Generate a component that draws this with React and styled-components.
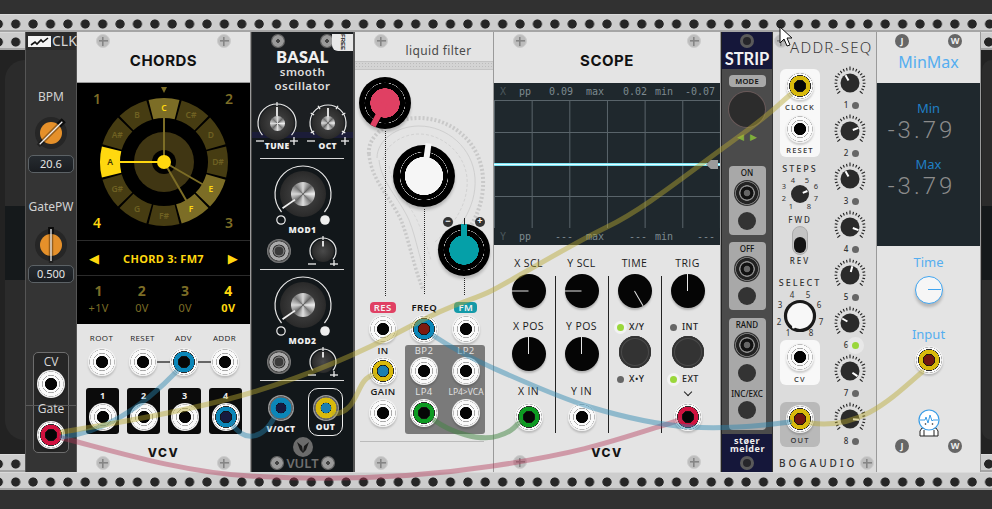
import React from 'react'
import styled, { createGlobalStyle } from 'styled-components'

const GlobalStyle = createGlobalStyle`
  html, body { margin: 0; padding: 0; background: #2e2e2e; }
  * { box-sizing: border-box; }
`

const SANS = '"Open Sans", "Noto Sans", sans-serif'
const YELLOW = '#ffd80f'
const OLIVE = '#7c6d26'
const DIM = '#463c12'

const Page = styled.div`
  position: relative;
  width: 992px;
  height: 509px;
  overflow: hidden;
  background: #2f2f2f;
  display: flex;
  flex-direction: column;
  font-family: ${SANS};
`

const Band = styled.div`
  height: ${p => p.$h}px;
  background: #313131;
`

const Rail = styled.div`
  height: 18px;
  flex: none;
  background-color: #cdcdcd;
  background-image: radial-gradient(circle at center, #262626 0 4.2px, transparent 4.9px);
  background-size: 17.4px 18px;
  background-position: ${p => p.$x ?? 7}px 0;
  border-top: 1px solid #dadada;
  border-bottom: 2px solid #a5a5a5;
`

const Rack = styled.div`
  display: flex;
  height: 440px;
`

const Stub = styled.div`
  width: ${p => p.$w}px;
  background: #222;
  display: flex;
  flex-direction: column;
  justify-content: space-between;
  overflow: hidden;
`

const StubPanel = styled.div`
  flex: 1;
  margin: 10px 0 14px ${p => p.$left}px;
  background: linear-gradient(#2b2b2b 0 146px, #15191b 146px 220px, #2b2b2b 220px);
  border-radius: 22px 0 0 22px;
`

const Panel = styled.div`
  width: ${p => p.$w}px;
  flex: none;
  display: flex;
  flex-direction: column;
  background: ${p => p.$bg || '#e4e4e4'};
  border-right: 1px solid ${p => p.$edge || '#9a9a9a'};
`

/* shared bits */
const Screw = styled.div`
  width: 14px;
  height: 14px;
  border-radius: 50%;
  background:
    linear-gradient(#858585, #858585) center / 9px 1.6px no-repeat,
    linear-gradient(#858585, #858585) center / 1.6px 9px no-repeat,
    #bcbcbc;
  border: 1px solid #cdcdcd;
  flex: none;
`

const ScrewRow = styled.div`
  display: flex;
  justify-content: space-between;
  align-items: center;
  height: 18px;
  margin-top: ${p => p.$mt ?? 0}px;
  padding: 0 ${p => p.$pad ?? 18}px;
  flex: none;
`

const TitleBar = styled.div`
  height: ${p => p.$h ?? 50}px;
  flex: none;
`

const Title = styled.div`
  margin-top: -1px;
  text-align: center;
  font: 700 15px/24px Inter, "Noto Sans", sans-serif;
  letter-spacing: 0.5px;
  color: #111;
`

const Port = styled.div`
  width: 28px;
  height: 28px;
  border-radius: 50%;
  flex: none;
  box-shadow: 0 2px 2px rgba(0, 0, 0, 0.18);
  background: ${p => p.$plug
    ? `radial-gradient(circle closest-side, ${p.$core || '#060606'} 0 38%, #141414 40% 43%, ${p.$plug} 45% 73%, #2b2b2b 75% 77%, #fcfcfc 79% 89%, #b4b4b4 90% 92%, #f2f2f2 94%)`
    : `radial-gradient(circle closest-side, #050505 0 42%, #fafafa 45% 59%, #a2a2a2 61% 63%, #fafafa 65% 86%, #bcbcbc 88% 90%, #f2f2f2 92%)`};
`

const Label = styled.div`
  height: ${p => p.$h ?? 14}px;
  margin-top: ${p => p.$mt ?? 0}px;
  font: ${p => p.$weight ?? 500} ${p => p.$size ?? 10.5}px/${p => p.$h ?? 14}px ${SANS};
  letter-spacing: ${p => p.$ls ?? 0.4}px;
  color: ${p => p.$color || '#1a1a1a'};
  text-align: center;
  white-space: nowrap;
  flex: none;
`

const Logo = styled.div`
  height: 14px;
  margin-top: ${p => p.$mt ?? 0}px;
  text-align: center;
  font: 800 12px/14px Inter, sans-serif;
  letter-spacing: 1.5px;
  color: #141414;
  flex: none;
`

/* CLK */
const ClkPanel = styled(Panel)`
  align-items: center;
  background: #343434;
  border-left: 1px solid #555;
  border-right: 1px solid #555;
`

const ClkHead = styled.div`
  display: flex;
  align-items: center;
  gap: 1px;
  height: 18px;
  margin-bottom: 39px;
  width: 100%;
  padding-left: 2px;
  background: #2b2b2b;
`

const ClkTag = styled.div`
  width: 23px;
  height: 11px;
  background: #f4f4f4;
  display: flex;
`

const ClkName = styled.div`
  font: 400 14px/18px "Noto Sans", sans-serif;
  color: #d6d6d6;
`

const ClkLabel = styled.div`
  height: 16px;
  margin-top: ${p => p.$mt ?? 0}px;
  font: 400 12px/16px "Noto Sans", sans-serif;
  color: #d2d2d2;
`

const KnobSlot = styled.div`
  margin-top: ${p => p.$mt ?? 0}px;
  height: ${p => p.$h}px;
  flex: none;
`

const ValueBox = styled.div`
  width: 46px;
  height: 18px;
  margin-top: ${p => p.$mt ?? 4}px;
  border-radius: 5px;
  border: 1px solid #5c6266;
  background: linear-gradient(#262b30, #1a1d21);
  color: #e5e5e5;
  font: 400 11px/16px "Noto Sans", sans-serif;
  text-align: center;
`

const GateBox = styled.div`
  width: 36px;
  height: 101px;
  margin-top: 69px;
  padding-top: 1px;
  border: 1px solid #6d6d6d;
  border-radius: 5px;
  background: #262626;
  display: flex;
  flex-direction: column;
  align-items: center;
`

const GateDivider = styled.div`
  width: 50px;
  height: 1px;
  flex: none;
  margin: 7px 0 -5px;
  background: #5a5a5a;
`

const GatePort = styled(Port)`
  margin-top: 4px;
`

/* chords */
const Screen = styled.div`
  background: #000;
  height: 242px;
  display: flex;
  flex-direction: column;
  flex: none;
  border-top: 1px solid #999;
`

const ChordRow = styled.div`
  height: 36px;
  flex: none;
  padding: 0 12px;
  border-top: 1px solid #2b2b2b;
  border-bottom: 1px solid #2b2b2b;
  display: flex;
  justify-content: space-between;
  align-items: center;
  color: ${YELLOW};
  font: 700 11px/1 "Noto Sans", sans-serif;
  letter-spacing: 0.3px;
`

const Arrow = styled.span`
  font: 13px/1 "DejaVu Sans", sans-serif;
`

const StepGrid = styled.div`
  display: grid;
  grid-template-columns: repeat(4, 1fr);
  text-align: center;
  padding-top: 5px;
`

const StepNum = styled.div`
  font: 700 14px/19px "Noto Sans", sans-serif;
  color: ${p => p.$on ? YELLOW : OLIVE};
`

const StepVolt = styled.div`
  font: ${p => p.$on ? 700 : 400} 11px/16px "Noto Sans", sans-serif;
  letter-spacing: 0.3px;
  color: ${p => p.$on ? YELLOW : OLIVE};
`

const ChordBottom = styled.div`
  flex: 1;
  display: flex;
  flex-direction: column;
`

const InLabels = styled.div`
  display: grid;
  grid-template-columns: repeat(4, 41px);
  padding: 7px 0 0 4px;
  height: 24px;
`

const InPorts = styled.div`
  display: flex;
  align-items: center;
  padding-left: 11px;
  height: 28px;
`

const Wire = styled.div`
  width: 13px;
  height: 2px;
  background: ${p => p.$off ? 'transparent' : '#666'};
`

const OutRow = styled.div`
  display: flex;
  gap: 8px;
  padding-left: 9px;
  margin-top: 12px;
`

const OutBox = styled.div`
  width: 33px;
  height: 46px;
  background: #0b0b0b;
  border-radius: 3px;
  display: flex;
  flex-direction: column;
  align-items: center;
`

const OutNum = styled.div`
  height: 15px;
  color: #f0f0f0;
  font: 700 9px/15px "Noto Sans", sans-serif;
`

/* basal */
const BasalPanel = styled(Panel)`
  background: linear-gradient(#1c1f22 0 100px, #1b1c38 100px 106px, #12171a 106px);
  border-left: 1px solid #444;
  border-right: 2px solid #555;
  position: relative;
`

const FreeTag = styled.div`
  position: absolute;
  top: 2px;
  right: 0;
  width: 21px;
  height: 17px;
  background: #e8e8e8;
  border-radius: 0 0 0 6px;
  color: #111;
  font: 900 6px/21px "Liberation Sans", sans-serif;
  text-align: center;
  writing-mode: vertical-rl;
`

const MetalScrew = styled.div`
  width: 14px;
  height: 14px;
  border-radius: 50%;
  background: radial-gradient(circle, #444 0 18%, #9a9a9a 20% 55%, #666 60%);
  flex: none;
`

const BasalName = styled.div`
  text-align: center;
  color: #f0f0f0;
  font: 800 16px/17px Lato, "Noto Sans", sans-serif;
  letter-spacing: 0.4px;
  margin-top: -2px;
`

const BasalSub = styled.div`
  text-align: center;
  color: #dcdcdc;
  font: 600 11.5px/14px "Noto Sans", sans-serif;
  letter-spacing: 0.4px;
`

const TwoCols = styled.div`
  display: grid;
  grid-template-columns: 1fr 1fr;
  justify-items: center;
  align-items: center;
  margin-top: ${p => p.$mt ?? 0}px;
  padding: 0 ${p => p.$pr ?? 0}px 0 ${p => p.$pl ?? 0}px;
  flex: none;
`

const KnobStack = styled.div`
  display: grid;
  width: ${p => p.$s}px;
  height: ${p => p.$s}px;
  margin: ${p => p.$m ?? '0 auto'};
  flex: none;
`

const KnobLayer = styled.div`
  grid-area: 1 / 1;
  display: flex;
  align-items: center;
  justify-content: center;
`

const MetalBody = styled.div`
  width: ${p => p.$s}px;
  height: ${p => p.$s}px;
  border-radius: 50%;
  background: radial-gradient(circle, #4a4a4a, #2a2a2a 70%, #1f1f1f);
  display: flex;
  align-items: center;
  justify-content: center;
`

const MetalCap = styled.div`
  width: ${p => p.$s}px;
  height: ${p => p.$s}px;
  border-radius: 50%;
  background: conic-gradient(#d8d8d8, #666, #eee, #777, #dedede, #666, #d8d8d8, #777, #d8d8d8);
`

const Divider = styled.div`
  height: 1px;
  background: #d8d8d8;
  margin: ${p => p.$m};
  flex: none;
`

const Jack = styled.div`
  width: ${p => p.$s ?? 24}px;
  height: ${p => p.$s ?? 24}px;
  border-radius: 50%;
  flex: none;
  background: ${p => p.$dark
    ? 'radial-gradient(circle closest-side, #666 0 22%, #111 28% 48%, #8a8a8a 52% 58%, #222 62% 82%, #777 86% 90%, #333 93%)'
    : 'radial-gradient(circle closest-side, #3b3b3b 0 35%, #777 38% 45%, #333 48% 52%, #aaa 56% 78%, #444 82%, #888)'};
`

const PlugJack = styled(Jack)`
  width: 26px;
  height: 26px;
  background: radial-gradient(circle closest-side, ${p => p.$core} 0 38%, #111 40%, ${p => p.$plug} 43% 78%, #666 82% 90%, #9a9a9a 92%);
`

const IoRow = styled.div`
  display: flex;
  justify-content: space-between;
  padding: 0 10px 0 7px;
  margin-top: 7px;
  flex: none;
`

const IoCell = styled.div`
  width: 44px;
  display: flex;
  flex-direction: column;
  align-items: center;
  padding-top: 7px;
`

const OutLoop = styled.div`
  width: 35px;
  height: 48px;
  border: 1.5px solid #eee;
  border-radius: 10px;
  display: flex;
  flex-direction: column;
  align-items: center;
  padding-top: 6px;
`

const VultMark = styled.div`
  width: 20px;
  height: 20px;
  margin: 1px auto -3px;
  border-radius: 50%;
  background: #6b6b6b;
  flex: none;
  display: flex;
  align-items: center;
  justify-content: center;
`

const VultFoot = styled.div`
  display: flex;
  justify-content: space-between;
  align-items: center;
  padding: 0 18px;
  height: 18px;
  color: #6f6f6f;
  font: 600 13px/18px "Noto Sans", sans-serif;
`

/* liquid filter */
const FilterHead = styled.div`
  margin-top: -6px;
  padding-left: 29px;
  text-align: center;
  font: 400 12px/14px "Noto Sans", sans-serif;
  letter-spacing: 0.4px;
  color: #4a4a4a;
  height: 17px;
  flex: none;
`

const PatternBar = styled.div`
  height: 9px;
  flex: none;
  background-color: #d4d4d4;
  background-image: radial-gradient(#bcbcbc 0.8px, transparent 1px);
  background-size: 3px 3px;
  border-top: 1px solid #c4c4c4;
  border-bottom: 1px solid #c4c4c4;
`

const KnobStage = styled.div`
  position: relative;
  height: 226px;
  padding-top: 7px;
  flex: none;
`

const Paisley = styled.svg`
  position: absolute;
  left: 8px;
  top: 44px;
`

const BigDial = styled.div`
  position: relative;
  width: ${p => p.$s}px;
  height: ${p => p.$s}px;
  margin: ${p => p.$mt}px 0 0 ${p => p.$ml}px;
  border-radius: 50%;
  box-shadow: 0 3px 3px rgba(0, 0, 0, 0.2);
  background: radial-gradient(circle closest-side, ${p => p.$color} 0 ${p => p.$core}%, #000 ${p => p.$core + 1}% 76%, #aaa 77% 78%, #000 79%);

  &::before {
    content: '';
    position: absolute;
    left: calc(50% - 3px);
    top: ${p => p.$top}px;
    width: 6px;
    height: ${p => p.$s / 2 - p.$top}px;
    background: ${p => p.$color};
    transform-origin: 50% 100%;
    transform: rotate(${p => p.$angle}deg);
  }

  &::after {
    content: '';
    position: absolute;
    left: 50%;
    top: calc(100% + 2px);
    height: ${p => p.$tail}px;
    border-left: 1.5px dotted #222;
  }
`

const PlusMinus = styled.span`
  position: absolute;
  top: -7px;
  ${p => p.$side}: 5px;
  width: 10px;
  height: 10px;
  border-radius: 50%;
  background: #333;
  color: #fff;
  font: 700 9px/9px "Liberation Sans", sans-serif;
  text-align: center;
`

const DialTick = styled.span`
  position: absolute;
  left: 25.5px;
  top: -6px;
  width: 1px;
  height: 7px;
  background: #222;
`

const Triple = styled.div`
  display: grid;
  grid-template-columns: repeat(3, 41.5px);
  justify-items: center;
  padding-left: 7px;
  flex: none;
`

const Pill = styled.div`
  height: 11px;
  margin: 6px 0 2px;
  padding: 0 ${p => p.$pad}px;
  border-radius: 4px;
  background: ${p => p.$bg || 'transparent'};
  color: ${p => p.$bg ? '#f3f3f3' : '#111'};
  font: 600 9.5px/11px "Noto Sans", sans-serif;
  letter-spacing: 0.4px;
`

const FilterLower = styled.div`
  display: flex;
  margin-top: 2px;
  flex: none;
`

const FilterLeft = styled.div`
  width: 50px;
  padding-left: 6px;
  display: flex;
  flex-direction: column;
  align-items: center;
`

const OutputsBox = styled.div`
  width: 80px;
  height: 89px;
  border-radius: 3px;
  background: #7a7a7a;
  display: grid;
  grid-template-columns: 42px 42px;
  justify-content: center;
  justify-items: center;
  align-content: start;
`

const Rule = styled.div`
  height: 1px;
  margin: 7px 9px 12px 5px;
  background: #bbb;
  flex: none;
`

/* scope */
const ScopeScreen = styled.div`
  height: 162px;
  flex: none;
  background: #1f282d;
  display: flex;
  flex-direction: column;
`

const StatRow = styled.div`
  display: grid;
  grid-template-columns: 18px 26px 35px 44px 30px 34px 34px;
  height: 17px;
  flex: none;
  font: 400 10px/17px "DejaVu Sans Mono", monospace;
  color: #7d8a90;
`

const StatCell = styled.span`
  text-align: ${p => p.$right ? 'right' : 'center'};
  color: ${p => p.$faint ? '#4b575c' : '#7d8a90'};
`

const GridArea = styled.div`
  position: relative;
  height: 128px;
  flex: none;
  background-image:
    linear-gradient(#59646a 1px, transparent 1px),
    linear-gradient(90deg, #59646a 1px, transparent 1px);
  background-size: 37.67px 32px;
`

const Trace = styled.div`
  position: absolute;
  left: 0;
  right: 0;
  top: 63px;
  height: 3px;
  background: linear-gradient(#45d6ee, #e4fdff, #45d6ee);
`

const TraceMark = styled.div`
  position: absolute;
  right: 2px;
  top: 60px;
  width: 12px;
  height: 9px;
  background: #9b9b9b;
  clip-path: polygon(0 50%, 40% 0, 100% 0, 100% 100%, 40% 100%);
`

const ScopeControls = styled.div`
  display: grid;
  grid-template-columns: repeat(4, 53px);
  padding-left: 8px;
  flex: none;
  height: 192px;
`

const ScopeCol = styled.div`
  display: flex;
  flex-direction: column;
  align-items: center;
  padding-top: 11px;
  background: ${p => p.$first ? 'none' : 'linear-gradient(#222, #222) left 31px / 1px 157px no-repeat'};
`

const Dial = styled.div`
  position: relative;
  width: 34px;
  height: 34px;
  margin-top: ${p => p.$mt ?? 4}px;
  border-radius: 50%;
  background: #050505;
  box-shadow: 0 2px 2px rgba(0, 0, 0, 0.22);
  flex: none;

  &::after {
    content: '';
    position: absolute;
    left: 16.5px;
    top: 0;
    width: 1px;
    height: 17px;
    background: #e6e6e6;
    transform-origin: 50% 100%;
    transform: rotate(${p => p.$angle}deg);
  }
`

const LedRow = styled.div`
  display: flex;
  align-items: center;
  gap: 5px;
  height: 14px;
  margin-top: ${p => p.$mt ?? 0}px;
  padding-left: ${p => p.$pl ?? 0}px;
  font: 500 9px/14px "Noto Sans", sans-serif;
  letter-spacing: 0.4px;
  color: #222;
  align-self: flex-start;
  flex: none;
`

const Led = styled.div`
  width: 7px;
  height: 7px;
  border-radius: 50%;
  flex: none;
  background: ${p => p.$on ? '#9ad73b' : '#666'};
  box-shadow: ${p => p.$on ? '0 0 0 3px rgba(255,255,255,.55)' : 'none'};
`

const PushButton = styled.div`
  width: ${p => p.$s ?? 32}px;
  height: ${p => p.$s ?? 32}px;
  margin-top: ${p => p.$mt ?? 0}px;
  border-radius: 50%;
  background: ${p => p.$tone || '#333'};
  box-shadow: inset 0 0 0 ${p => p.$s ? 0 : 2}px #333, inset 0 0 0 ${p => p.$s ? 0 : 3}px #4a4a4a;
  flex: none;
`

const Chevron = styled.div`
  width: 6px;
  height: 6px;
  margin: 3px 0 8px;
  border-right: 1px solid #222;
  border-bottom: 1px solid #222;
  transform: rotate(45deg);
  flex: none;
`

/* strip */
const StripPanel = styled(Panel)`
  background: #4b4b4b;
  align-items: center;
  border-left: 1px solid #222;
  border-right: 1px solid #333;
`

const NavyTop = styled.div`
  width: 100%;
  height: 37px;
  background: #15173a;
  display: flex;
  flex-direction: column;
  align-items: center;
  color: #f2f2f2;
  font: 700 16.5px/18px Lato, "Noto Sans", sans-serif;
  padding-top: 2px;
  flex: none;
`

const NavyScrew = styled.div`
  width: 14px;
  height: 14px;
  border-radius: 50%;
  margin-bottom: 2px;
  border: 3px solid #5a5a5a;
  background: #26262a;
  flex: none;
`

const NavyBottom = styled.div`
  width: 100%;
  flex: 1;
  margin-top: 4px;
  background: #15173a;
  display: flex;
  flex-direction: column;
  align-items: center;
  padding-top: 3px;
`

const NavyText = styled.div`
  width: 34px;
  height: 16px;
  flex: none;
  color: #eee;
  text-align: center;
  font: 700 9px/8px "Noto Sans", sans-serif;
  letter-spacing: 0.5px;
`

const NavyFootScrew = styled(NavyScrew)`
  margin-top: 3px;
`

const ModePill = styled.div`
  width: 37px;
  height: 12px;
  margin-top: 6px;
  border-radius: 4px;
  background: #a8a8a8;
  color: #111;
  font: 600 7.5px/12px "Noto Sans", sans-serif;
  text-align: center;
  letter-spacing: 0.3px;
`

const ModeKnob = styled.div`
  width: 36px;
  height: 36px;
  margin-top: 5px;
  border-radius: 50%;
  background: #2c2c2c;
  box-shadow: 0 0 0 1px #6a5a5a;
`

const ModeArrows = styled.div`
  display: flex;
  gap: 6px;
  height: 11px;
  margin: 5px 0 23px;
  color: #7fae3a;
  font: 9px/11px "DejaVu Sans", sans-serif;
`

const StripBox = styled.div`
  width: 37px;
  height: ${p => p.$h}px;
  margin-top: ${p => p.$mt ?? 0}px;
  border-radius: 4px;
  background: #a8a8a8;
  display: flex;
  flex-direction: column;
  align-items: center;
  flex: none;
`

const StripLabel = styled.div`
  height: 14px;
  margin-top: ${p => p.$mt ?? 0}px;
  color: #111;
  font: 500 8px/14px "Noto Sans", sans-serif;
  flex: none;
`

/* addr-seq */
const AddrHead = styled.div`
  height: 34px;
  display: flex;
  padding: 2px 0 0 1px;
  gap: 2px;
  flex: none;
`

const AddrTitle = styled.div`
  font: 300 15px/22px "Noto Sans", sans-serif;
  letter-spacing: 1.3px;
  color: #3a3a3a;
  padding-top: 2px;
`

const AddrBody = styled.div`
  display: flex;
  height: 387px;
  flex: none;
`

const AddrLeft = styled.div`
  width: 54px;
  padding-top: 3px;
  display: flex;
  flex-direction: column;
  align-items: center;
`

const AddrRight = styled.div`
  width: 46px;
  display: flex;
  flex-direction: column;
  align-items: center;
`

const SeqBox = styled.div`
  width: 40px;
  height: ${p => p.$h}px;
  margin-top: ${p => p.$mt ?? 0}px;
  border-radius: 6px;
  background: ${p => p.$bg || '#f8f8f8'};
  padding-top: 3px;
  display: flex;
  flex-direction: column;
  align-items: center;
  flex: none;
`

const SeqLabel = styled.div`
  height: 12px;
  margin-top: ${p => p.$mt ?? 0}px;
  color: #333;
  font: 500 ${p => p.$size ?? 7.5}px/12px "Noto Sans", sans-serif;
  letter-spacing: ${p => p.$ls ?? 1.2}px;
  flex: none;
`

const Toggle = styled.div`
  width: 16px;
  height: 29px;
  flex: none;
  border-radius: 8px;
  background: #c4c4c4;
  border: 1px solid #aaa;
  display: flex;
  flex-direction: column;
  justify-content: flex-end;
  padding: 3px 1px 1px;
`

const ToggleCap = styled.div`
  height: 16px;
  border-radius: 7px;
  background: #151515;
`

const StepCell = styled.div`
  height: 48px;
  display: flex;
  flex-direction: column;
  align-items: center;
  flex: none;
`

const StepTag = styled.div`
  display: flex;
  align-items: center;
  gap: 4px;
  height: 12px;
  margin-top: -1px;
  padding-left: 3px;
  font: 500 8px/12px "Noto Sans", sans-serif;
  color: #333;
`

const StepLed = styled.div`
  width: 7px;
  height: 7px;
  border-radius: 50%;
  background: ${p => p.$on ? '#9ad73b' : '#666'};
  box-shadow: ${p => p.$on ? '0 0 0 5px rgba(255,255,255,.35)' : 'none'};
`

const AddrFoot = styled.div`
  display: flex;
  justify-content: space-between;
  align-items: center;
  padding: 0 2px 0 6px;
  height: 18px;
  margin-top: 1px;
  color: #333;
  font: 500 10px/18px "Noto Sans", sans-serif;
  letter-spacing: 3px;
`

/* minmax */
const Badge = styled.div`
  width: 14px;
  height: 14px;
  border-radius: 50%;
  background: #666;
  color: #eee;
  font: 700 9px/14px "Noto Sans", sans-serif;
  text-align: center;
`

const BlueName = styled.div`
  height: ${p => p.$h ?? 18}px;
  margin-top: ${p => p.$mt ?? 0}px;
  text-align: center;
  color: ${p => p.$color || '#55aef0'};
  font: 400 ${p => p.$size ?? 13}px/${p => p.$h ?? 18}px "Noto Sans", sans-serif;
  flex: none;
`

const MinMaxScreen = styled.div`
  height: 163px;
  flex: none;
  background: #1f282d;
  padding-top: 16px;
`

const BigValue = styled.div`
  height: 26px;
  padding-right: 14px;
  text-align: center;
  color: #8c8c8c;
  font: 300 24px/26px Roboto, sans-serif;
  letter-spacing: 3px;
`

const TimeKnob = styled.div`
  position: relative;
  width: 28px;
  height: 28px;
  margin: 5px auto 0;
  border-radius: 50%;
  background: #f6f6f6;
  border: 1.5px solid #41a5f0;
  box-shadow: 0 3px 3px rgba(0, 0, 0, 0.2);

  &::after {
    content: '';
    position: absolute;
    left: 12.5px;
    top: 12px;
    width: 13px;
    height: 1px;
    background: #41a5f0;
  }
`

const Centered = styled.div`
  display: flex;
  justify-content: center;
  margin-top: ${p => p.$mt ?? 0}px;
  flex: none;
`

const RingSvg = styled.svg`
  overflow: visible;
`

/* over everything */
const CableLayer = styled.svg`
  position: absolute;
  left: 0;
  top: 0;
  pointer-events: none;
`

const CursorMark = styled.svg`
  position: absolute;
  left: 779px;
  top: 26px;
`

const CHROMATIC = ['C', 'C#', 'D', 'D#', 'E', 'F', 'F#', 'G', 'G#', 'A', 'A#', 'B']

const polar = (r, deg) => {
  const a = (deg - 90) * Math.PI / 180
  return [87 + r * Math.cos(a), 79 + r * Math.sin(a)]
}

const sector = i => {
  const a0 = i * 30 - 14
  const a1 = i * 30 + 14
  const [x0, y0] = polar(64, a0)
  const [x1, y1] = polar(64, a1)
  const [x2, y2] = polar(44, a1)
  const [x3, y3] = polar(44, a0)
  return `M${x0} ${y0}A64 64 0 0 1 ${x1} ${y1}L${x2} ${y2}A44 44 0 0 0 ${x3} ${y3}Z`
}

const ChordWheel = () => {
  const fills = { C: OLIVE, E: OLIVE, F: OLIVE, A: YELLOW }
  const spokes = [[0, OLIVE], [120, OLIVE], [150, OLIVE]]
  const [ax] = polar(44, 270)
  const corner = { fontFamily: 'Noto Sans', fontWeight: 600, fontSize: 14, textAnchor: 'middle' }
  return (
    <svg width="173" height="157">
      <polygon points="84,4 90,4 87,10" fill={OLIVE} />
      <text x="20" y="21" fill={OLIVE} style={corner}>1</text>
      <text x="152" y="21" fill={OLIVE} style={corner}>2</text>
      <text x="152" y="145" fill={OLIVE} style={corner}>3</text>
      <text x="20" y="145" fill={YELLOW} style={corner}>4</text>
      {CHROMATIC.map((n, i) => {
        const [tx, ty] = polar(54, i * 30)
        const lit = fills[n]
        return (
          <g key={n}>
            <path d={sector(i)} fill={lit || DIM} />
            <text x={tx} y={ty + 3} textAnchor="middle" fontFamily="Noto Sans" fontWeight="600" fontSize="8.5"
              fill={n === 'A' ? '#3c3206' : lit ? YELLOW : '#6f6122'}>{n}</text>
          </g>
        )
      })}
      <circle cx="87" cy="79" r="30" fill="#403613" />
      <circle cx="87" cy="79" r="12" fill="#000" />
      {spokes.map(([deg, c]) => {
        const [x, y] = polar(deg === 0 ? 44 : 48, deg)
        return <line key={deg} x1="87" y1="79" x2={x} y2={y} stroke={c} strokeWidth="2" />
      })}
      <line x1="87" y1="79" x2={ax} y2="79" stroke={YELLOW} strokeWidth="2" />
      <circle cx="87" cy="79" r="7" fill={YELLOW} />
    </svg>
  )
}

const OrangeKnob = ({ angle }) => (
  <svg width="36" height="36" viewBox="-18 -18 36 36">
    <circle r="16" fill="#262626" />
    <circle r="11" fill="#e5902a" />
    <g transform={`rotate(${angle})`}>
      <rect x="-3" y="-18" width="6" height="7" fill="#111" />
      <line y1="-18" y2="18" stroke="#000" strokeOpacity="0.35" strokeWidth="4.5" />
      <line y1="-16" y2="16" stroke="#eee" strokeWidth="1.3" />
    </g>
  </svg>
)

const BasalArc = ({ size, r, ticks, angle, bottom }) => {
  const c = size / 2
  const pt = (rad, deg) => {
    const a = (deg - 90) * Math.PI / 180
    return [c + rad * Math.cos(a), c + rad * Math.sin(a)]
  }
  const [sx, sy] = pt(r, -130)
  const [ex, ey] = pt(r, 130)
  const [px, py] = pt(r - 3, angle)
  const [qx, qy] = pt(r * 0.35, angle)
  return (
    <svg width={size} height={size}>
      <path d={`M${sx} ${sy}A${r} ${r} 0 1 1 ${ex} ${ey}`} fill="none" stroke="#e8e8e8" strokeWidth="1.2" />
      {ticks.map(t => {
        const [a, b] = pt(r - 2, t)
        const [d, e] = pt(r + 2, t)
        return <line key={t} x1={a} y1={b} x2={d} y2={e} stroke="#eee" strokeWidth="1.2" />
      })}
      <line x1={qx} y1={qy} x2={px} y2={py} stroke="#f0f0f0" strokeWidth="1.8" />
      {bottom}
    </svg>
  )
}

const SignMarks = ({ l, r, y }) => (
  <>
    <line x1={l - 4} x2={l + 4} y1={y} y2={y} stroke="#eee" strokeWidth="1.3" />
    <line x1={r - 4} x2={r + 4} y1={y} y2={y} stroke="#eee" strokeWidth="1.3" />
    <line x1={r} x2={r} y1={y - 4} y2={y + 4} stroke="#eee" strokeWidth="1.3" />
  </>
)

const BasalSmall = ({ size, r, body, cap, ticks = [], angle = 0, bottom, margin }) => (
  <KnobStack $s={size} $m={margin}>
    <KnobLayer><MetalBody $s={body}>{cap ? <MetalCap $s={cap} /> : null}</MetalBody></KnobLayer>
    <KnobLayer><BasalArc size={size} r={r} ticks={ticks} angle={angle} bottom={bottom} /></KnobLayer>
  </KnobStack>
)

const ModKnob = () => (
  <BasalSmall size={64} r={28} body={46} cap={24} angle={-125} margin="3px auto 0" bottom={(
    <>
      <circle cx="10" cy="58" r="4.2" fill="none" stroke="#eee" strokeWidth="1.2" />
      <circle cx="54" cy="58" r="4.8" fill="#eee" />
    </>
  )} />
)

const TickKnob = ({ angle }) => {
  const ticks = Array.from({ length: 21 }, (_, i) => -130 + i * 13)
  return (
    <svg width="34" height="34" viewBox="-17 -17 34 34">
      {ticks.map((t, i) => (
        <line key={t} y1={i % 5 === 0 ? -16.5 : -15.5} y2="-12.8" stroke="#222" strokeWidth="1.1" transform={`rotate(${t})`} />
      ))}
      <circle r="9.5" fill="#2a2a2a" />
      <line y1="-9" y2="-3" stroke="#fff" strokeWidth="2" transform={`rotate(${angle})`} />
    </svg>
  )
}

const RingNumbers = ({ w, h, spots, size = 7.5 }) => (
  <RingSvg width={w} height={h}>
    {spots.map(([t, x, y]) => (
      <text key={t} x={x} y={y} textAnchor="middle" fontFamily="Noto Sans" fontSize={size} fill="#333">{t}</text>
    ))}
  </RingSvg>
)

const StepsDial = () => (
  <KnobStack $s={36} $m="1px 0 0">
    <KnobLayer>
      <RingNumbers w={36} h={36} spots={[['4', 11, 7], ['5', 25, 7], ['3', 2, 13], ['6', 34, 13], ['2', 2, 25], ['7', 34, 25], ['1', 9, 33], ['8', 27, 33]]} />
    </KnobLayer>
    <KnobLayer>
      <svg width="36" height="36" viewBox="-18 -18 36 36">
        <circle r="9" fill="#2a2a2a" />
        <line y1="-8" y2="-3" stroke="#fff" strokeWidth="2" transform="rotate(68)" />
      </svg>
    </KnobLayer>
  </KnobStack>
)

const SelectDial = () => (
  <KnobStack $s={50} $m="2px 0 0">
    <KnobLayer>
      <RingNumbers w={50} h={50} size={8} spots={[['4', 17, 7], ['5', 33, 7], ['3', 5, 17], ['6', 44, 17], ['2', 4, 34], ['7', 46, 34], ['1', 13, 45], ['8', 36, 45]]} />
    </KnobLayer>
    <KnobLayer>
      <svg width="50" height="50" viewBox="-25 -25 50 50">
        <circle r="14.5" fill="#f8f8f8" stroke="#1a1a1a" strokeWidth="3.2" />
        <circle cx="-6.5" cy="11" r="1.5" fill="#fff" />
      </svg>
    </KnobLayer>
  </KnobStack>
)

const ClkWave = () => (
  <svg width="23" height="11">
    <path d="M3 9 7 6 9 8 13 4 15 6 20 2" fill="none" stroke="#111" strokeWidth="1.6" />
  </svg>
)

const VultHead = () => (
  <svg width="14" height="14" viewBox="0 0 14 14">
    <path d="M1 2 6 6 7 12 8 6 13 2 10 10 7 13 4 10Z" fill="#1a1a1a" />
  </svg>
)

const Mascot = () => (
  <svg width="24" height="28" viewBox="0 0 24 28">
    <path d="M5 19h14l2 3v5H3v-5Z" fill="#fff" stroke="#222" />
    <line x1="7" y1="21" x2="7" y2="27" stroke="#222" />
    <line x1="17" y1="21" x2="17" y2="27" stroke="#222" />
    <circle cx="12" cy="11" r="10" fill="#fff" stroke="#3a9de6" strokeWidth="1.2" />
    <path d="M3 11h5l1-3 2 6 2-8 2 6 1-1h5" fill="none" stroke="#3a9de6" strokeWidth="1" />
    <circle cx="8.5" cy="15" r="0.8" fill="#222" />
    <circle cx="15.5" cy="15" r="0.8" fill="#222" />
  </svg>
)

const Paisleys = () => (
  <Paisley width="124" height="180" viewBox="0 0 124 180" fill="none">
    <path d="M6 40C4 22 26 4 56 4c32 0 62 24 64 60 2 36-20 64-44 84" stroke="#c9c9c9" strokeWidth="4" strokeDasharray="2 2" />
    <path d="M14 44C14 26 34 12 56 12c28 0 54 22 56 52 2 30-18 56-38 72" stroke="#cfcfcf" />
    <path d="M20 46C22 32 38 20 56 20c24 0 46 20 48 44 2 26-14 48-32 64" stroke="#d2d2d2" strokeDasharray="3 2" />
    <path d="M6 40c2 26 22 44 32 66 8 20 12 44 22 70" stroke="#c9c9c9" strokeWidth="3.5" strokeDasharray="2 2" />
    <path d="M16 46c2 22 20 38 30 60 8 20 10 40 18 56" stroke="#d0d0d0" />
    <path d="M26 52c2 18 18 34 28 54 6 14 10 26 14 40" stroke="#d6d6d6" strokeDasharray="3 2" />
  </Paisley>
)

const Cables = () => (
  <CableLayer width="992" height="509" fill="none" strokeLinecap="round" strokeWidth="5">
    <g stroke="#b23456" strokeOpacity="0.42">
      <path d="M62 438C110 450 180 472 250 476S400 480 493 466S610 442 680 420" />
    </g>
    <g stroke="#2885af" strokeOpacity="0.45">
      <path d="M62 437C100 433 140 410 178 370" />
      <path d="M232 424C244 442 262 440 274 418" />
      <path d="M434 336C455 350 475 360 493 368S560 398 590 407S660 425 690 427S760 426 790 422" />
    </g>
    <g stroke="#408340" strokeOpacity="0.5">
      <path d="M434 420C450 432 480 442 498 436S514 426 520 422" />
    </g>
    <g stroke="#b8a830" strokeOpacity="0.45">
      <path d="M62 432C130 421 200 408 250 393S353 357 407 328S470 302 493 290S570 245 607 227S683 177 730 143S770 112 791 94" />
      <path d="M334 414C360 412 355 378 374 375" />
      <path d="M810 423C860 430 890 400 922 372" />
    </g>
  </CableLayer>
)

const Cursor = () => (
  <CursorMark width="14" height="22" viewBox="0 0 14 22">
    <path d="M1 1v16l4-4 3 7 3-1-3-7h5Z" fill="#fff" stroke="#111" />
  </CursorMark>
)

const ClkModule = () => (
  <ClkPanel $w={52}>
    <ClkHead>
      <ClkTag><ClkWave /></ClkTag>
      <ClkName>CLK</ClkName>
    </ClkHead>
    <ClkLabel>BPM</ClkLabel>
    <KnobSlot $mt={10} $h={36}><OrangeKnob angle={45} /></KnobSlot>
    <ValueBox>20.6</ValueBox>
    <ClkLabel $mt={26}>GatePW</ClkLabel>
    <KnobSlot $mt={12} $h={36}><OrangeKnob angle={0} /></KnobSlot>
    <ValueBox $mt={2}>0.500</ValueBox>
    <GateBox>
      <Label $size={12} $h={16} $color="#d8d8d8" $weight={400} $ls={0}>CV</Label>
      <Port />
      <GateDivider />
      <Label $size={12} $h={16} $color="#d8d8d8" $weight={400} $ls={0}>Gate</Label>
      <GatePort $plug="#d0123f" />
    </GateBox>
  </ClkPanel>
)

const ChordsModule = () => (
  <Panel $w={174}>
    <TitleBar>
      <ScrewRow $pad={19}><Screw /><Screw /></ScrewRow>
      <Title>CHORDS</Title>
    </TitleBar>
    <Screen>
      <ChordWheel />
      <ChordRow>
        <Arrow>◀</Arrow>
        <span>CHORD 3: FM7</span>
        <Arrow>▶</Arrow>
      </ChordRow>
      <StepGrid>
        <StepNum>1</StepNum><StepNum>2</StepNum><StepNum>3</StepNum><StepNum $on>4</StepNum>
        <StepVolt>+1V</StepVolt><StepVolt>0V</StepVolt><StepVolt>0V</StepVolt><StepVolt $on>0V</StepVolt>
      </StepGrid>
    </Screen>
    <ChordBottom>
      <InLabels>
        <Label $size={8}>ROOT</Label>
        <Label $size={8}>RESET</Label>
        <Label $size={8}>ADV</Label>
        <Label $size={8}>ADDR</Label>
      </InLabels>
      <InPorts>
        <Port /><Wire $off /><Port /><Wire /><Port $plug="#0b86b8" /><Wire /><Port />
      </InPorts>
      <OutRow>
        <OutBox><OutNum>1</OutNum><Port /></OutBox>
        <OutBox><OutNum>2</OutNum><Port /></OutBox>
        <OutBox><OutNum>3</OutNum><Port /></OutBox>
        <OutBox><OutNum>4</OutNum><Port $plug="#0b86b8" $core="#161a40" /></OutBox>
      </OutRow>
      <Logo $mt={12}>VCV</Logo>
      <ScrewRow $pad={19} $mt={-6}><Screw /><Screw /></ScrewRow>
    </ChordBottom>
  </Panel>
)

const BasalModule = () => (
  <BasalPanel $w={104}>
    <FreeTag>FREE</FreeTag>
    <ScrewRow $pad={19}><MetalScrew /><MetalScrew /></ScrewRow>
    <BasalName>BASAL</BasalName>
    <BasalSub>smooth</BasalSub>
    <BasalSub>oscillator</BasalSub>
    <TwoCols $mt={8}>
      <BasalSmall size={44} r={19} body={34} cap={15} angle={0} ticks={[0]} bottom={<SignMarks l={5} r={39} y={40} />} />
      <BasalSmall size={44} r={18} body={32} cap={14} angle={0} ticks={[-120, -60, 60, 120, -30, 30]} bottom={<SignMarks l={5} r={39} y={40} />} />
    </TwoCols>
    <TwoCols>
      <Label $mt={-5} $h={12} $size={8.5} $weight={800} $color="#eee">TUNE</Label>
      <Label $mt={-5} $h={12} $size={8.5} $weight={800} $color="#eee">OCT</Label>
    </TwoCols>
    <Divider $m="6px 9px 0 8px" />
    <ModKnob />
    <Label $mt={-2} $h={12} $size={8.5} $weight={800} $color="#eee">MOD1</Label>
    <TwoCols $pl={5} $pr={8}>
      <Jack $s={24} />
      <BasalSmall size={30} r={13} body={22} angle={0} ticks={[0]} bottom={<SignMarks l={4} r={26} y={28} />} />
    </TwoCols>
    <Divider $m="3px 9px 0 8px" />
    <ModKnob />
    <Label $mt={-2} $h={12} $size={8.5} $weight={800} $color="#eee">MOD2</Label>
    <TwoCols $pl={5} $pr={8}>
      <Jack $s={24} />
      <BasalSmall size={30} r={13} body={22} angle={0} ticks={[0]} bottom={<SignMarks l={4} r={26} y={28} />} />
    </TwoCols>
    <Divider $m="3px 9px 0 8px" />
    <IoRow>
      <IoCell>
        <PlugJack $plug="#0b86b8" $core="#161a40" />
        <Label $h={12} $size={8.5} $weight={800} $color="#eee" $mt={2}>V/OCT</Label>
      </IoCell>
      <OutLoop>
        <PlugJack $plug="#d8b90c" $core="#1b7fb0" />
        <Label $h={12} $size={8.5} $weight={800} $color="#eee">OUT</Label>
      </OutLoop>
    </IoRow>
    <VultMark><VultHead /></VultMark>
    <VultFoot><MetalScrew />VULT<MetalScrew /></VultFoot>
  </BasalPanel>
)

const FilterModule = () => (
  <Panel $w={139}>
    <ScrewRow $pad={19}><Screw /></ScrewRow>
    <FilterHead>liquid filter</FilterHead>
    <PatternBar />
    <KnobStage>
      <Paisleys />
      <BigDial $s={52} $mt={0} $ml={4} $color="#e04063" $core={56} $top={0} $angle={-152} $tail={165} />
      <BigDial $s={62} $mt={16} $ml={38} $color="#f6f6f6" $core={61} $top={-2} $angle={8} $tail={85} />
      <BigDial $s={52} $mt={17} $ml={83} $color="#05a0a8" $core={56} $top={0} $angle={0} $tail={17}>
        <PlusMinus $side="left">−</PlusMinus>
        <DialTick />
        <PlusMinus $side="right">+</PlusMinus>
      </BigDial>
    </KnobStage>
    <Triple>
      <Pill $bg="#e04063" $pad={4}>RES</Pill>
      <Pill $pad={0}>FREQ</Pill>
      <Pill $bg="#149aa8" $pad={4}>FM</Pill>
      <Port />
      <Port $plug="#0b86b8" $core="#7d1a10" />
      <Port />
    </Triple>
    <FilterLower>
      <FilterLeft>
        <Label $h={12} $size={9.5} $weight={600}>IN</Label>
        <Port $plug="#d8b90c" $core="#1b7fb0" />
        <Label $h={14} $size={9.5} $weight={600}>GAIN</Label>
        <Port />
      </FilterLeft>
      <OutputsBox>
        <Label $h={12} $size={9.5} $color="#e4e4e4">BP2</Label>
        <Label $h={12} $size={9.5} $color="#e4e4e4">LP2</Label>
        <Port />
        <Port />
        <Label $h={14} $size={9.5} $color="#e4e4e4">LP4</Label>
        <Label $h={14} $size={8.5} $ls={0} $color="#e4e4e4">LP4&gt;VCA</Label>
        <Port $plug="#0d9a22" />
        <Port />
      </OutputsBox>
    </FilterLower>
    <Rule />
    <ScrewRow $pad={19}><Screw /></ScrewRow>
  </Panel>
)

const ScopeModule = () => (
  <Panel $w={227}>
    <TitleBar $h={51}>
      <ScrewRow $pad={19}><Screw /><Screw /></ScrewRow>
      <Title>SCOPE</Title>
    </TitleBar>
    <ScopeScreen>
      <StatRow>
        <StatCell $faint>X</StatCell><StatCell>pp</StatCell><StatCell $right>0.09</StatCell>
        <StatCell>max</StatCell><StatCell $right>0.02</StatCell><StatCell>min</StatCell><StatCell $right>-0.07</StatCell>
      </StatRow>
      <GridArea><Trace /><TraceMark /></GridArea>
      <StatRow>
        <StatCell $faint>Y</StatCell><StatCell>pp</StatCell><StatCell $right>---</StatCell>
        <StatCell>max</StatCell><StatCell $right>---</StatCell><StatCell>min</StatCell><StatCell $right>---</StatCell>
      </StatRow>
    </ScopeScreen>
    <ScopeControls>
      <ScopeCol $first>
        <Label>X SCL</Label>
        <Dial $angle={-90} />
        <Label $mt={11}>X POS</Label>
        <Dial $angle={0} />
        <Label $mt={13}>X IN</Label>
        <Centered $mt={5}><Port $plug="#0d9a22" /></Centered>
      </ScopeCol>
      <ScopeCol>
        <Label>Y SCL</Label>
        <Dial $angle={-90} />
        <Label $mt={11}>Y POS</Label>
        <Dial $angle={0} />
        <Label $mt={13}>Y IN</Label>
        <Centered $mt={5}><Port /></Centered>
      </ScopeCol>
      <ScopeCol>
        <Label>TIME</Label>
        <Dial $angle={150} />
        <LedRow $mt={12} $pl={9}><Led $on />X/Y</LedRow>
        <PushButton $mt={2} />
        <LedRow $mt={4} $pl={9}><Led />X•Y</LedRow>
      </ScopeCol>
      <ScopeCol>
        <Label>TRIG</Label>
        <Dial $angle={0} />
        <LedRow $mt={12} $pl={9}><Led />INT</LedRow>
        <PushButton $mt={2} />
        <LedRow $mt={4} $pl={9}><Led $on />EXT</LedRow>
        <Chevron />
        <Port $plug="#d0123f" />
      </ScopeCol>
    </ScopeControls>
    <Logo $mt={9}>VCV</Logo>
    <ScrewRow $pad={19} $mt={-7}><Screw /><Screw /></ScrewRow>
  </Panel>
)

const StripModule = () => (
  <StripPanel $w={52}>
    <NavyTop><NavyScrew />STRIP</NavyTop>
    <ModePill>MODE</ModePill>
    <ModeKnob />
    <ModeArrows><span>◀</span><span>▶</span></ModeArrows>
    <StripBox $h={69}>
      <StripLabel>ON</StripLabel>
      <Jack $s={26} $dark />
      <PushButton $s={18} $mt={6} $tone="#333" />
    </StripBox>
    <StripBox $h={68} $mt={7}>
      <StripLabel>OFF</StripLabel>
      <Jack $s={26} $dark />
      <PushButton $s={18} $mt={5} $tone="#333" />
    </StripBox>
    <StripBox $h={112} $mt={8}>
      <StripLabel>RAND</StripLabel>
      <Jack $s={26} $dark />
      <PushButton $s={18} $mt={6} $tone="#333" />
      <StripLabel $mt={5}>INC/EXC</StripLabel>
      <PushButton $s={18} $tone="#333" />
    </StripBox>
    <NavyBottom>
      <NavyText>støer melder</NavyText>
      <NavyFootScrew />
    </NavyBottom>
  </StripPanel>
)

const STEP_ANGLES = [-30, 70, -30, 110, 15, -60, 125, 95]

const AddrSeqModule = () => (
  <Panel $w={104} $bg="#dcdcdc">
    <AddrHead><Screw /><AddrTitle>ADDR-SEQ</AddrTitle></AddrHead>
    <AddrBody>
      <AddrLeft>
        <SeqBox $h={88}>
          <Port $plug="#d8b90c" />
          <SeqLabel $mt={1}>CLOCK</SeqLabel>
          <Centered $mt={2}><Port /></Centered>
          <SeqLabel $mt={1}>RESET</SeqLabel>
        </SeqBox>
        <SeqLabel $mt={6} $size={9} $ls={2}>STEPS</SeqLabel>
        <StepsDial />
        <SeqLabel $mt={2} $size={8} $ls={2}>FWD</SeqLabel>
        <Toggle><ToggleCap /></Toggle>
        <SeqLabel $size={8} $ls={2}>REV</SeqLabel>
        <SeqLabel $mt={10} $size={9} $ls={2}>SELECT</SeqLabel>
        <SelectDial />
        <SeqBox $h={45} $mt={-1}>
          <Port />
          <SeqLabel $mt={2}>CV</SeqLabel>
        </SeqBox>
        <SeqBox $h={45} $mt={17} $bg="#b9b9b9">
          <Port $plug="#d8b90c" $core="#6f1710" />
          <SeqLabel $mt={1}>OUT</SeqLabel>
        </SeqBox>
      </AddrLeft>
      <AddrRight>
        {STEP_ANGLES.map((a, i) => (
          <StepCell key={i}>
            <TickKnob angle={a} />
            <StepTag>{i + 1}<StepLed $on={i === 5} /></StepTag>
          </StepCell>
        ))}
      </AddrRight>
    </AddrBody>
    <AddrFoot>BOGAUDIO<Screw /></AddrFoot>
  </Panel>
)

const MinMaxModule = () => (
  <Panel $w={104}>
    <TitleBar $h={51}>
      <ScrewRow $pad={18}><Badge>J</Badge><Badge>W</Badge></ScrewRow>
      <BlueName $size={16} $h={24}>MinMax</BlueName>
    </TitleBar>
    <MinMaxScreen>
      <BlueName $color="#1f7fc4">Min</BlueName>
      <BigValue>-3.79</BigValue>
      <BlueName $color="#1f7fc4" $mt={12}>Max</BlueName>
      <BigValue>-3.79</BigValue>
    </MinMaxScreen>
    <BlueName $mt={7}>Time</BlueName>
    <TimeKnob />
    <BlueName $mt={21}>Input</BlueName>
    <Centered $mt={3}><Port $plug="#d8b90c" $core="#6f1710" /></Centered>
    <Centered $mt={35}><Mascot /></Centered>
    <ScrewRow $pad={18}><Badge>J</Badge><Badge>W</Badge></ScrewRow>
  </Panel>
)

export default function App() {
  return (
    <Page>
      <GlobalStyle />
      <Band $h={14} />
      <Rail />
      <Rack>
        <Stub $w={25}>
          <Rail $x={7} />
          <StubPanel $left={5} />
          <Rail $x={7} />
        </Stub>
        <ClkModule />
        <ChordsModule />
        <BasalModule />
        <FilterModule />
        <ScopeModule />
        <StripModule />
        <AddrSeqModule />
        <MinMaxModule />
        <Stub $w={11}>
          <Rail $x={-1} />
          <StubPanel $left={1} />
          <Rail $x={-1} />
        </Stub>
      </Rack>
      <Rail />
      <Band $h={19} />
      <Cables />
      <Cursor />
    </Page>
  )
}
